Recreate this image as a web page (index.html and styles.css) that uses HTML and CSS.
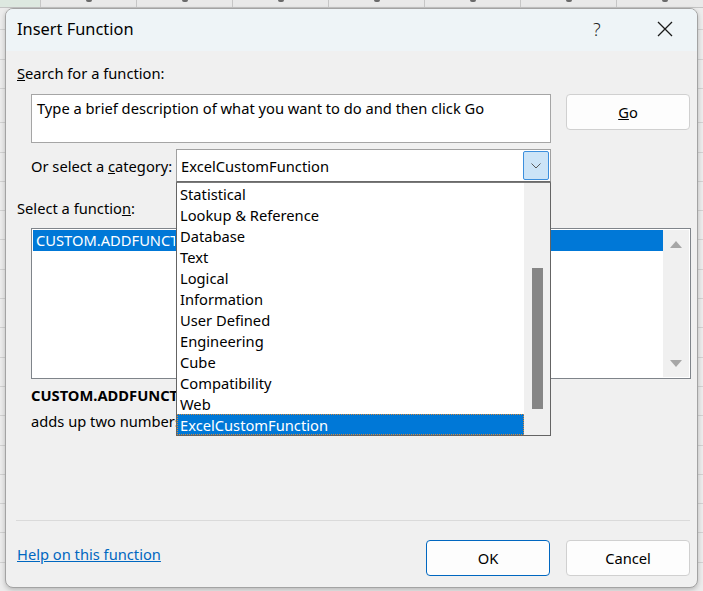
FILE: index.html
```html
<!DOCTYPE html>
<html>
<head>
<meta charset="utf-8">
<link rel="stylesheet" href="styles.css">
</head>
<body>
<div class="sheet-head">
  <span class="col col-first"></span><span class="col"></span><span class="col"></span><span class="col"></span><span class="col"></span><span class="col"></span><span class="col"></span><span class="col"></span>
</div>
<div class="dialog">
  <div class="titlebar">
    <span class="title">Insert Function</span>
    <span class="help-q">?</span>
    <span class="close">
      <svg width="16" height="16" viewBox="0 0 16 16"><path d="M1 1 L15 15 M15 1 L1 15" stroke="#1a1a1a" stroke-width="1.3" fill="none"/></svg>
    </span>
  </div>
  <div class="content">
    <div class="label l-search"><u>S</u>earch for a function:</div>
    <div class="search-row">
      <div class="search-box">Type a brief description of what you want to do and then click Go</div>
      <div class="btn go"><u>G</u>o</div>
    </div>
    <div class="cat-row">
      <span class="cat-label">Or select a <u>c</u>ategory:</span>
      <div class="combo">
        <span class="combo-value">ExcelCustomFunction</span>
        <span class="combo-btn">
          <svg width="10" height="6" viewBox="0 0 10 6"><path d="M0.5 0.5 L5 5 L9.5 0.5" stroke="#5a5a5a" stroke-width="1" fill="none"/></svg>
        </span>
        <div class="dropdown">
          <ul class="dd-items">
            <li>Statistical</li>
            <li>Lookup &amp; Reference</li>
            <li>Database</li>
            <li>Text</li>
            <li>Logical</li>
            <li>Information</li>
            <li>User Defined</li>
            <li>Engineering</li>
            <li>Cube</li>
            <li>Compatibility</li>
            <li>Web</li>
            <li class="sel">ExcelCustomFunction</li>
          </ul>
          <div class="dd-scroll"><div class="dd-thumb"></div></div>
        </div>
      </div>
    </div>
    <div class="label l-select">Select a functio<u>n</u>:</div>
    <div class="fn-list">
      <div class="fn-items"><div class="fn-item sel"><span class="fn-name">CUSTOM.ADDFUNCTION</span></div></div>
      <div class="fn-scroll">
        <svg width="12" height="7" viewBox="0 0 12 7"><polygon points="6,0 12,7 0,7" fill="#a6a6a6"/></svg>
        <svg width="12" height="7" viewBox="0 0 12 7"><polygon points="0,0 12,0 6,7" fill="#a6a6a6"/></svg>
      </div>
    </div>
    <div class="fn-sig">CUSTOM.ADDFUNCTION(first,second)</div>
    <div class="fn-desc">adds up two numbers.</div>
  </div>
  <div class="footer">
    <div class="sep"></div>
    <div class="footer-row">
      <a class="help-link">Help on this function</a>
      <div class="buttons">
        <div class="btn ok">OK</div>
        <div class="btn cancel">Cancel</div>
      </div>
    </div>
  </div>
</div>
</body>
</html>
```
FILE: styles.css
```css
html, body {
  margin: 0;
  padding: 0;
}
body {
  width: 703px;
  height: 591px;
  overflow: hidden;
  font-family: "Noto Sans", "Open Sans", sans-serif;
  font-size: 14.7px;
  color: #000;
  background-color: #ececec;
  background-image: repeating-linear-gradient(to bottom, transparent 0, transparent 28.3px, #d2d2d2 28.3px, #d2d2d2 29.3px);
  background-position: 0 94px;
}
.sheet-head {
  height: 7px;
  display: flex;
  background: #e9e9e9;
  border-bottom: 1px solid #c4c4c4;
  overflow: hidden;
}
.col {
  width: 96px;
  flex: none;
  border-right: 1px solid #c6c6c6;
  box-sizing: border-box;
  display: flex;
  justify-content: center;
  align-items: flex-start;
}
.col::after {
  content: "";
  width: 6px;
  height: 2px;
  border-radius: 0 0 3px 3px;
  background: #6a6a6a;
}
.col-first {
  width: 41px;
  background: #dde8e0;
}
.col-first::after {
  display: none;
}
.dialog {
  margin: 0 0 0 5px;
  width: 693px;
  height: 580px;
  box-sizing: border-box;
  border: 1px solid #a3a3a3;
  border-radius: 8px;
  background: #f0f0f0;
  box-shadow: 0 2px 5px rgba(0,0,0,0.22);
  display: flex;
  flex-direction: column;
  overflow: hidden;
}
.titlebar {
  height: 42px;
  flex: none;
  background: #eef4f7;
  display: flex;
  align-items: center;
  padding-left: 11px;
}
.title {
  font-size: 16.4px;
  flex: 1;
  margin-top: -3px;
}
.help-q {
  font-size: 18px;
  font-weight: 300;
  color: #222;
  width: 20px;
  margin-right: 44px;
  margin-top: -3px;
}
.close {
  width: 16px;
  height: 16px;
  margin-right: 24px;
  margin-top: -2px;
  display: flex;
}
.content {
  padding-left: 11px;
  display: flex;
  flex-direction: column;
}
.label {
  line-height: 20px;
  height: 20px;
  white-space: nowrap;
}
.l-search { margin-top: 12px; }
.search-row {
  margin-top: 11px;
  padding-left: 14px;
  display: flex;
  align-items: flex-start;
}
.search-box {
  width: 520px;
  height: 49px;
  box-sizing: border-box;
  border: 1px solid #a5a5a5;
  background: #fff;
  padding: 3px 5px;
  line-height: 20px;
  white-space: nowrap;
  overflow: hidden;
}
.btn {
  width: 124px;
  height: 36px;
  box-sizing: border-box;
  border: 1px solid #d0d0d0;
  border-radius: 4px;
  background: #fdfdfd;
  display: flex;
  align-items: center;
  justify-content: center;
}
.go {
  margin-left: 15px;
}
.cat-row {
  margin-top: 6px;
  padding-left: 14px;
  display: flex;
  align-items: center;
  height: 33px;
}
.cat-label {
  width: 145px;
  flex: none;
  white-space: nowrap;
}
.combo {
  position: relative;
  width: 375px;
  height: 33px;
  box-sizing: border-box;
  border: 1px solid #a0a0a0;
  border-bottom-color: #6a6a6a;
  background: #fff;
  display: flex;
  align-items: center;
}
.combo-value {
  flex: 1;
  padding-left: 4px;
}
.combo-btn {
  width: 26px;
  height: 29px;
  box-sizing: border-box;
  margin-right: 1px;
  background: #cce4f7;
  border: 1px solid #3c8fdd;
  border-radius: 2px;
  display: flex;
  align-items: center;
  justify-content: center;
}
.dropdown {
  position: absolute;
  left: -1px;
  top: calc(100% + 1px);
  width: 375px;
  height: 254px;
  box-sizing: border-box;
  border: 1px solid #646464;
  border-top-color: #7a7a7a;
  background: #fff;
  display: flex;
  z-index: 5;
}
.dd-items {
  list-style: none;
  margin: 0;
  padding: 0;
  width: 347px;
}
.dd-items li {
  height: 20px;
  line-height: 20px;
  padding-top: 1px;
  padding-left: 3px;
  white-space: nowrap;
}
.dd-items li.sel {
  background: #0078d7;
  outline: 1px dotted #d8893a;
  outline-offset: -1px;
  color: #fff;
}
.dd-scroll {
  flex: 1;
  background: #f0f0f0;
  padding-top: 85px;
  padding-left: 8px;
  box-sizing: border-box;
}
.dd-thumb {
  width: 11px;
  height: 141px;
  background: #868686;
}
.l-select { margin-top: 16px; }
.fn-list {
  margin-top: 10px;
  margin-left: 14px;
  width: 660px;
  height: 151px;
  box-sizing: border-box;
  border: 1px solid #7f848a;
  background: #fff;
  display: flex;
  padding: 1px;
}
.fn-items {
  flex: 1;
}
.fn-item {
  height: 21px;
  line-height: 21px;
  padding-left: 3px;
}
.fn-name {
  display: block;
  width: 139px;
  overflow: hidden;
  white-space: nowrap;
}
.fn-item.sel {
  background: #0078d7;
  color: #fff;
}
.fn-scroll {
  width: 26px;
  background: #f0f0f0;
  display: flex;
  flex-direction: column;
  align-items: center;
  justify-content: space-between;
  padding: 11px 0 10px;
  box-sizing: border-box;
}
.fn-sig {
  margin-top: 6px;
  margin-left: 14px;
  width: 145px;
  overflow: hidden;
  line-height: 20px;
  font-weight: bold;
  white-space: nowrap;
}
.fn-desc {
  margin-top: 6px;
  margin-left: 14px;
  width: 145px;
  overflow: hidden;
  line-height: 20px;
  white-space: nowrap;
}
.footer {
  margin-top: auto;
  padding-bottom: 11px;
}
.sep {
  margin-left: 10px;
  width: 674px;
  height: 1px;
  background: #dadada;
}
.footer-row {
  margin-top: 19px;
  display: flex;
  align-items: center;
  padding-left: 11px;
  padding-right: 7px;
}
.help-link {
  flex: 1;
  color: #0067c0;
  text-decoration: underline;
  margin-top: -8px;
}
.buttons {
  display: flex;
  gap: 16px;
}
.ok {
  border-color: #0067c0;
}
```
